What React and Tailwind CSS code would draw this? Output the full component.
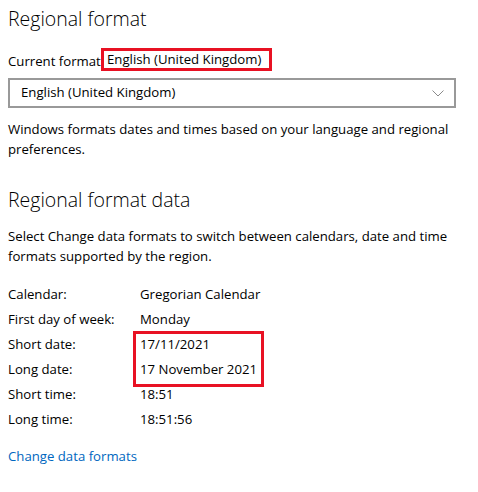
import React from "react";

const rows = [
  ["Calendar:", "Gregorian Calendar"],
  ["First day of week:", "Monday"],
  ["Short date:", "17/11/2021"],
  ["Long date:", "17 November 2021"],
  ["Short time:", "18:51"],
  ["Long time:", "18:51:56"],
];

export default function App() {
  return (
    <div
      className="w-[478px] h-[492px] bg-white text-black px-2 pt-[5px] text-[13.2px]"
      style={{ fontFamily: '"Open Sans", "Noto Sans", sans-serif' }}
    >
      <h1 className="text-[19.5px] leading-7 font-light">Regional format</h1>

      <div className="relative mt-[18px] leading-5 whitespace-nowrap">
        <span>Current format</span>
        <span className="absolute left-[93px] top-[-3px] h-[23px] w-[171px] border-[3px] border-[#e81123] bg-white pl-[3px] leading-[17px]">
          English (United Kingdom)
        </span>
      </div>

      <div className="mt-[7px] h-[30px] w-[448px] border-2 border-[#999999] flex items-center justify-between pl-[11px] pr-[10px]">
        <span>English (United Kingdom)</span>
        <svg width="12" height="7" viewBox="0 0 12 7" fill="none">
          <polyline points="0.5,0.5 6,6 11.5,0.5" stroke="#8a8a8a" strokeWidth="1" />
        </svg>
      </div>

      <p className="mt-[11px] leading-5">
        Windows formats dates and times based on your language and regional
        preferences.
      </p>

      <h2 className="mt-[27px] text-[19.5px] leading-7 font-light">
        Regional format data
      </h2>

      <p className="mt-3 leading-5">
        Select Change data formats to switch between calendars, date and time
        formats supported by the region.
      </p>

      <div className="relative mt-4 grid grid-cols-[132px_1fr] auto-rows-[25px] items-center">
        {rows.map(([label, value]) => (
          <React.Fragment key={label}>
            <span>{label}</span>
            <span>{value}</span>
          </React.Fragment>
        ))}
        <div className="absolute left-[125px] top-[49px] w-[131px] h-[56px] border-[3px] border-[#e81123]" />
      </div>

      <a className="block mt-[14px] leading-5 text-[#0067c0]">Change data formats</a>
    </div>
  );
}
